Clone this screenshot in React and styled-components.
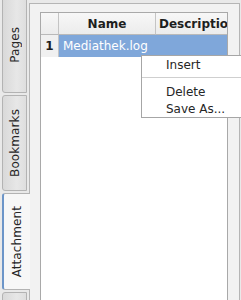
import React from 'react';
import styled, { createGlobalStyle } from 'styled-components';

const GlobalStyle = createGlobalStyle`
  html, body {
    margin: 0;
    padding: 0;
    background: #e9e9e9;
  }
  * {
    box-sizing: border-box;
  }
`;

const Window = styled.div`
  position: relative;
  display: flex;
  width: 241px;
  height: 300px;
  overflow: hidden;
  background: #e9e9e9;
  font-family: 'DejaVu Sans', 'Liberation Sans', sans-serif;
  font-size: 12px;
  color: #2b2b2b;
`;

const TabStrip = styled.div`
  display: flex;
  flex-direction: column;
  gap: 2px;
  width: 30px;
  flex-shrink: 0;
  padding: 0 0 0 2px;
  margin-top: -4px;
  z-index: 1;
`;

const Tab = styled.div`
  flex-shrink: 0;
  height: ${p => p.$h}px;
  width: ${p => (p.$active ? 28 : 25)}px;
  display: flex;
  align-items: center;
  justify-content: center;
  border: 1px solid #b3b3b3;
  border-right: ${p => (p.$active ? 'none' : '1px solid #b3b3b3')};
  border-left: ${p => (p.$active ? '2px solid #6c95c8' : '1px solid #b3b3b3')};
  border-radius: 3px 0 0 3px;
  background: ${p =>
    p.$active ? '#f7f7f7' : 'linear-gradient(to right, #d9d9d9, #e7e7e7 60%, #dedede)'};
`;

const TabLabel = styled.span`
  writing-mode: vertical-rl;
  transform: rotate(180deg);
  font-size: 12px;
  color: #262626;
  letter-spacing: 0.1px;
`;

const Panel = styled.div`
  flex: 1;
  min-width: 0;
  margin: 3px 1px 0 -1px;
  border: 1px solid #b5b5b5;
  border-bottom: none;
  background: #f2f2f2;
  padding: 8px 11px 0 10px;
  display: flex;
`;

const Table = styled.div`
  flex: 1;
  min-width: 0;
  background: #ffffff;
  border: 1px solid #a9a9a9;
  border-bottom: none;
  overflow: hidden;
  display: grid;
  grid-template-columns: 18px 97px minmax(0, 1fr);
  grid-template-rows: 22px 22px 1fr;
`;

const HeadCell = styled.div`
  display: flex;
  align-items: center;
  justify-content: ${p => (p.$left ? 'flex-start' : 'center')};
  padding-left: ${p => (p.$left ? 3 : 0)}px;
  font-weight: bold;
  white-space: nowrap;
  overflow: hidden;
  background: linear-gradient(to bottom, #f7f7f7, #ececec);
  border-right: ${p => (p.$left ? 'none' : '1px solid #c4c4c4')};
  border-bottom: 1px solid #b9b9b9;
  color: #1e1e1e;
`;

const RowNum = styled.div`
  display: flex;
  align-items: center;
  justify-content: center;
  font-weight: bold;
  background: #f0f0f0;
  border-right: 1px solid #c4c4c4;
  color: #1e1e1e;
`;

const Cell = styled.div`
  display: flex;
  align-items: center;
  padding-left: 4px;
  background: ${p => (p.$selected ? '#7fa7da' : '#ffffff')};
  color: ${p => (p.$selected ? '#ffffff' : '#2b2b2b')};
  white-space: nowrap;
  overflow: hidden;
`;

const Filler = styled.div`
  grid-column: 1 / -1;
  background: #ffffff;
`;

const Menu = styled.div`
  position: absolute;
  left: 141px;
  top: 55px;
  width: 110px;
  background: #ffffff;
  border: 1px solid #a6a6a6;
  padding: 0;
  z-index: 2;
`;

const MenuItem = styled.div`
  height: 17px;
  display: flex;
  align-items: center;
  padding-left: 24px;
  font-size: 12px;
  color: #262626;
`;

const Separator = styled.div`
  height: 1px;
  background: #cfcfcf;
  margin: 4px 0 5px 0;
`;

export default function App() {
  return (
    <Window>
      <GlobalStyle />
      <TabStrip>
        <Tab $h={97}>
          <TabLabel>Pages</TabLabel>
        </Tab>
        <Tab $h={96}>
          <TabLabel>Bookmarks</TabLabel>
        </Tab>
        <Tab $h={97} $active>
          <TabLabel>Attachment</TabLabel>
        </Tab>
        <Tab $h={20} />
      </TabStrip>
      <Panel>
        <Table>
          <HeadCell />
          <HeadCell>Name</HeadCell>
          <HeadCell $left>Description</HeadCell>
          <RowNum>1</RowNum>
          <Cell $selected>Mediathek.log</Cell>
          <Cell $selected />
          <Filler />
        </Table>
      </Panel>
      <Menu>
        <MenuItem>Insert</MenuItem>
        <Separator />
        <MenuItem>Delete</MenuItem>
        <MenuItem>Save As...</MenuItem>
      </Menu>
    </Window>
  );
}
